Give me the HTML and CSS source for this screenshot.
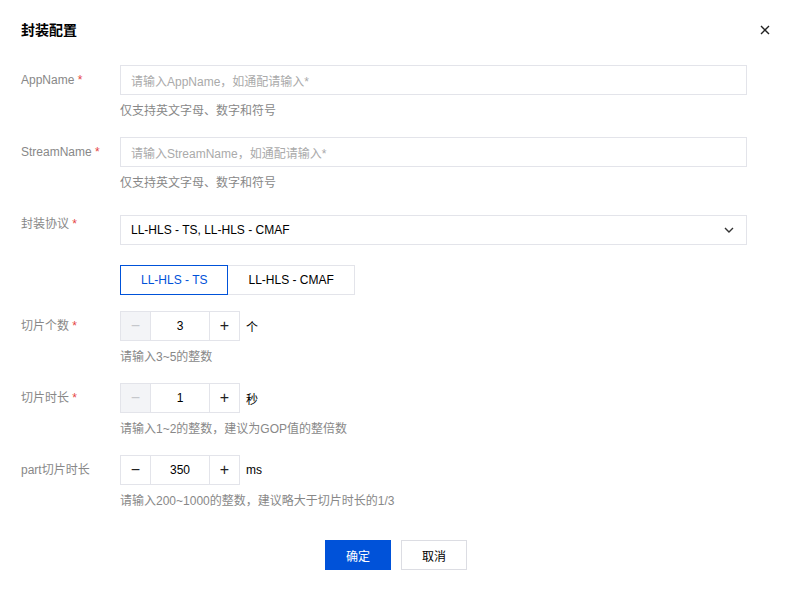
FILE: index.html
```html
<!DOCTYPE html>
<html lang="zh-CN">
<head>
<meta charset="utf-8">
<title>封装配置</title>
<link rel="stylesheet" href="styles.css">
</head>
<body>
<div class="dialog">
  <div class="header">
    <div class="title">封装配置</div>
    <svg class="close" width="10" height="10" viewBox="0 0 10 10"><path d="M1 1L9 9M9 1L1 9" stroke="#222" stroke-width="1.4" fill="none"/></svg>
  </div>
  <div class="form">
    <div class="item item-1">
      <div class="label">AppName <span class="req">*</span></div>
      <div class="control">
        <div class="input"><span class="placeholder">请输入AppName，如通配请输入*</span></div>
        <div class="help">仅支持英文字母、数字和符号</div>
      </div>
    </div>
    <div class="item item-2">
      <div class="label">StreamName <span class="req">*</span></div>
      <div class="control">
        <div class="input"><span class="placeholder">请输入StreamName，如通配请输入*</span></div>
        <div class="help">仅支持英文字母、数字和符号</div>
      </div>
    </div>
    <div class="item item-3">
      <div class="label label-up">封装协议 <span class="req">*</span></div>
      <div class="control">
        <div class="input select"><span class="value">LL-HLS - TS, LL-HLS - CMAF</span>
          <svg class="chev" width="10" height="6" viewBox="0 0 10 6"><path d="M1 1L5 5L9 1" stroke="#333" stroke-width="1.4" fill="none"/></svg>
        </div>
      </div>
    </div>
    <div class="item item-4">
      <div class="label"></div>
      <div class="control">
        <div class="radio-group">
          <div class="radio active">LL-HLS - TS</div>
          <div class="radio">LL-HLS - CMAF</div>
        </div>
      </div>
    </div>
    <div class="item item-5">
      <div class="label">切片个数 <span class="req">*</span></div>
      <div class="control">
        <div class="stepper-row">
          <div class="stepper">
            <div class="step-btn disabled">−</div>
            <div class="step-val">3</div>
            <div class="step-btn">+</div>
          </div>
          <span class="unit">个</span>
        </div>
        <div class="help">请输入3~5的整数</div>
      </div>
    </div>
    <div class="item item-6">
      <div class="label">切片时长 <span class="req">*</span></div>
      <div class="control">
        <div class="stepper-row">
          <div class="stepper">
            <div class="step-btn disabled">−</div>
            <div class="step-val">1</div>
            <div class="step-btn">+</div>
          </div>
          <span class="unit">秒</span>
        </div>
        <div class="help">请输入1~2的整数，建议为GOP值的整倍数</div>
      </div>
    </div>
    <div class="item item-7">
      <div class="label">part切片时长</div>
      <div class="control">
        <div class="stepper-row">
          <div class="stepper">
            <div class="step-btn">−</div>
            <div class="step-val">350</div>
            <div class="step-btn">+</div>
          </div>
          <span class="unit">ms</span>
        </div>
        <div class="help">请输入200~1000的整数，建议略大于切片时长的1/3</div>
      </div>
    </div>
  </div>
  <div class="footer">
    <div class="btn primary">确定</div>
    <div class="btn">取消</div>
  </div>
</div>
</body>
</html>
```
FILE: styles.css
```css
* { box-sizing: border-box; }
html, body { margin: 0; padding: 0; background: #fff; }
body {
  font-family: "Liberation Sans", Arial, "Noto Sans CJK SC", sans-serif;
  font-size: 12px;
  color: #000;
}
.dialog { width: 792px; height: 591px; padding: 20px 45px 0 21px; }
.header { display: flex; justify-content: space-between; align-items: center; height: 20px; margin-right: -23px; }
.title { font-size: 14px; font-weight: bold; color: #000; line-height: 20px; }
.close { display: block; }
.form { margin-top: 25px; }
.item { display: flex; }
.item-2 { margin-top: 17px; }
.item-3 { margin-top: 23px; }
.item-4 { margin-top: 20px; }
.item-5 { margin-top: 16px; }
.item-6 { margin-top: 17px; }
.item-7 { margin-top: 17px; }
.label { width: 99px; flex: none; line-height: 30px; color: #888; }
.label-up { line-height: 18px; }
.req { color: #e54545; }
.control { flex: 1; }
.input {
  height: 30px; border: 1px solid #e3e4ea; padding: 0 10px;
  display: flex; align-items: center;
}
.placeholder { color: #aaa; }
.select { justify-content: space-between; padding-right: 12px; }
.select .value { color: #000; }
.help { margin-top: 7px; line-height: 18px; color: #888; }
.radio-group { display: flex; }
.radio {
  height: 30px; line-height: 28px; padding: 0 20px;
  border: 1px solid #e3e4ea; color: #000;
}
.radio + .radio { border-left: none; }
.radio.active { border-color: #0052d9; color: #0052d9; }
.stepper-row { display: flex; align-items: center; }
.stepper { display: flex; }
.step-btn {
  width: 31px; height: 30px; border: 1px solid #e3e4ea;
  display: flex; align-items: center; justify-content: center;
  font-size: 16px; color: #222;
}
.step-btn + .step-val, .step-val + .step-btn { margin-left: -1px; }
.step-btn:last-child { width: 31px; }
.step-btn.disabled { background: #f3f4f7; color: #c5c7cc; }
.step-val {
  width: 60px; height: 30px; border: 1px solid #e3e4ea;
  display: flex; align-items: center; justify-content: center; color: #000;
}
.unit { margin-left: 6px; color: #000; }
.footer { display: flex; justify-content: center; gap: 10px; margin-top: 30px; margin-left: -21px; margin-right: -45px; }
.btn {
  width: 66px; height: 30px; border: 1px solid #dcdde3;
  display: flex; align-items: center; justify-content: center; color: #000;
}
.btn.primary { background: #0052d9; border-color: #0052d9; color: #fff; }
```
